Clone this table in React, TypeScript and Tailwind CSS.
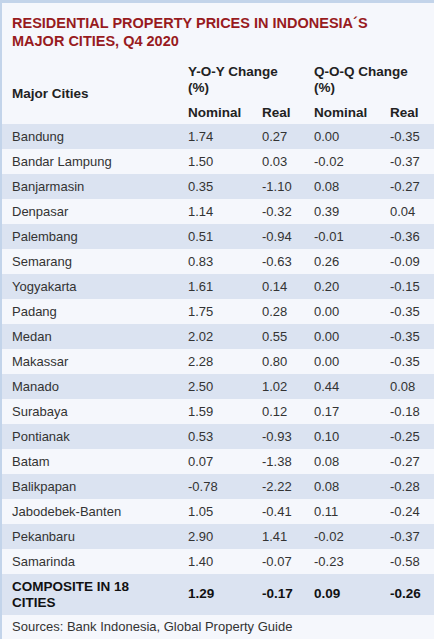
const rows: [string, string, string, string, string][] = [
  ["Bandung", "1.74", "0.27", "0.00", "-0.35"],
  ["Bandar Lampung", "1.50", "0.03", "-0.02", "-0.37"],
  ["Banjarmasin", "0.35", "-1.10", "0.08", "-0.27"],
  ["Denpasar", "1.14", "-0.32", "0.39", "0.04"],
  ["Palembang", "0.51", "-0.94", "-0.01", "-0.36"],
  ["Semarang", "0.83", "-0.63", "0.26", "-0.09"],
  ["Yogyakarta", "1.61", "0.14", "0.20", "-0.15"],
  ["Padang", "1.75", "0.28", "0.00", "-0.35"],
  ["Medan", "2.02", "0.55", "0.00", "-0.35"],
  ["Makassar", "2.28", "0.80", "0.00", "-0.35"],
  ["Manado", "2.50", "1.02", "0.44", "0.08"],
  ["Surabaya", "1.59", "0.12", "0.17", "-0.18"],
  ["Pontianak", "0.53", "-0.93", "0.10", "-0.25"],
  ["Batam", "0.07", "-1.38", "0.08", "-0.27"],
  ["Balikpapan", "-0.78", "-2.22", "0.08", "-0.28"],
  ["Jabodebek-Banten", "1.05", "-0.41", "0.11", "-0.24"],
  ["Pekanbaru", "2.90", "1.41", "-0.02", "-0.37"],
  ["Samarinda", "1.40", "-0.07", "-0.23", "-0.58"],
];

export default function App() {
  return (
    <div
      className="w-[434px] h-[639px] overflow-hidden bg-[#f5f7fc] border-t-[3px] border-l-2 border-[#c3d4ea] text-[13px] text-[#222]"
      style={{ fontFamily: '"Liberation Sans", Arial, sans-serif' }}
    >
      <h1 className="pt-[11px] pl-[10px] pr-4 text-[14.5px] leading-[18px] font-bold text-[#981b1e]">
        RESIDENTIAL PROPERTY PRICES IN INDONESIA´S
        <br />
        MAJOR CITIES, Q4 2020
      </h1>
      <table className="table-fixed border-collapse w-[432px]">
        <colgroup>
          <col className="w-[186px]" />
          <col className="w-[74px]" />
          <col className="w-[52px]" />
          <col className="w-[76px]" />
          <col />
        </colgroup>
        <thead className="font-bold text-left text-[13.5px]">
          <tr>
            <th rowSpan={2} className="pl-[10px] pt-[14px] align-middle">
              Major Cities
            </th>
            <th colSpan={2} className="pt-[14px] pb-[4px] leading-[16px] align-top">
              Y-O-Y Change
              <br />
              (%)
            </th>
            <th colSpan={2} className="pt-[14px] pb-[4px] leading-[16px] align-top">
              Q-O-Q Change
              <br />
              (%)
            </th>
          </tr>
          <tr className="h-[24px] leading-[16px] align-bottom">
            <th className="pb-[3px]">Nominal</th>
            <th className="pb-[3px]">Real</th>
            <th className="pb-[3px]">Nominal</th>
            <th className="pb-[3px]">Real</th>
          </tr>
        </thead>
        <tbody className="text-[#333]">
          {rows.map((r, i) => (
            <tr key={r[0]} className={`h-[25px] ${i % 2 === 0 ? "bg-[#dbe3f1]" : ""}`}>
              <td className="pl-[10px]">{r[0]}</td>
              <td>{r[1]}</td>
              <td>{r[2]}</td>
              <td>{r[3]}</td>
              <td>{r[4]}</td>
            </tr>
          ))}
          <tr className="h-[41px] bg-[#dbe3f1] font-bold text-[#111] text-[13.5px]">
            <td className="pl-[10px] leading-[16px]">
              COMPOSITE IN 18
              <br />
              CITIES
            </td>
            <td>1.29</td>
            <td>-0.17</td>
            <td>0.09</td>
            <td>-0.26</td>
          </tr>
          <tr className="h-[24px]">
            <td colSpan={5} className="pl-[10px]">
              Sources: Bank Indonesia, Global Property Guide
            </td>
          </tr>
        </tbody>
      </table>
    </div>
  );
}
